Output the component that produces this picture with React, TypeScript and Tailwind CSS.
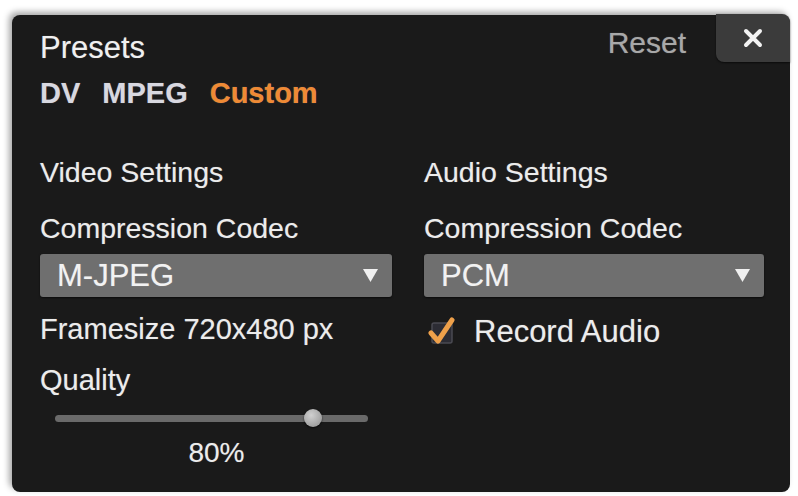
function Dropdown({ value, width }: { value: string; width: string }) {
  return (
    <div
      className={`${width} h-[43px] flex items-center justify-between pl-[17px] pr-[14px] rounded-[3px] bg-[#6f6f6f] shadow-[0_1px_2px_rgba(0,0,0,0.6)]`}
    >
      <span className="text-[31px] leading-none text-[#f2f2f2]">{value}</span>
      <svg width="15" height="13" viewBox="0 0 15 13">
        <path d="M0 0 H15 L7.5 13 Z" fill="#f0f0f0" />
      </svg>
    </div>
  );
}

export default function App() {
  return (
    <div className="w-[798px] h-[496px] bg-white pt-[15px] pl-[12px] pr-[8px] pb-[4px] font-['Liberation_Sans',Arial,sans-serif]">
      <div className="relative h-full w-full rounded-[8px] bg-[#1a1a1a] shadow-[-3px_-3px_6px_rgba(0,0,0,0.35)] pl-[28px] [text-shadow:0_0_1px_rgba(255,255,255,0.35)]">
        {/* header */}
        <div className="flex justify-between">
          <div>
            <div className="mt-[18px] h-[30px] flex items-center text-[31px] text-[#f0f0f0]">Presets</div>
            <div className="mt-[17px] h-[28px] flex items-center gap-[22px] text-[29px] font-bold">
              <span className="text-[#d8d8e0]">DV</span>
              <span className="text-[#d8d8e0]">MPEG</span>
              <span className="text-[#ef8a34]">Custom</span>
            </div>
          </div>
          <div className="flex items-start">
            <div className="mt-[12px] h-[30px] flex items-center text-[30px] text-[#a8a8a8]">Reset</div>
            <div className="ml-[30px] -mt-px w-[74px] h-[48px] flex items-center justify-center rounded-bl-[8px] rounded-tr-[8px] bg-[#3b3b3b] shadow-[0_1px_2px_rgba(0,0,0,0.6)]">
              <svg width="20" height="20" viewBox="0 0 20 20">
                <path d="M3 3 L17 17 M17 3 L3 17" stroke="#f2f2f2" strokeWidth="4" strokeLinecap="round" />
              </svg>
            </div>
          </div>
        </div>

        {/* settings */}
        <div className="flex text-[#ececec]">
          <div className="w-[384px]">
            <div className="mt-[50px] h-[28px] flex items-center text-[28.5px]">Video Settings</div>
            <div className="mt-[28px] h-[28px] flex items-center text-[28.5px]">Compression Codec</div>
            <div className="mt-[12px]">
              <Dropdown value="M-JPEG" width="w-[352px]" />
            </div>
            <div className="mt-[19px] h-[28px] flex items-center text-[29px]">Framesize 720x480 px</div>
            <div className="mt-[23px] h-[28px] flex items-center text-[29px]">Quality</div>
            <div className="mt-[13px] ml-[15px] w-[313px]">
              <div className="relative h-[20px] flex items-center">
                <div className="h-[7px] w-full rounded-full bg-[#6a6a6a]" />
                <div className="absolute left-[249px] top-px w-[18px] h-[18px] rounded-full bg-[radial-gradient(circle_at_40%_35%,#d0d0d0,#8e8e8e)] shadow-[0_1px_2px_rgba(0,0,0,0.7)]" />
              </div>
              <div className="mt-[11px] h-[28px] flex items-center justify-center pl-[10px] text-[28px]">80%</div>
            </div>
          </div>
          <div>
            <div className="mt-[50px] h-[28px] flex items-center text-[28.5px]">Audio Settings</div>
            <div className="mt-[28px] h-[28px] flex items-center text-[28.5px]">Compression Codec</div>
            <div className="mt-[12px]">
              <Dropdown value="PCM" width="w-[340px]" />
            </div>
            <div className="mt-[19px] h-[30px] flex items-center gap-[14px] pl-[4px]">
              <svg width="32" height="30" viewBox="0 0 32 30">
                <rect x="4" y="7" width="20" height="20" rx="2" fill="#2c2c34" stroke="#4a4a52" strokeWidth="1.5" />
                <path d="M3 17 L10 25 L24 4" fill="none" stroke="#eea04a" strokeWidth="5" strokeLinecap="round" strokeLinejoin="round" />
              </svg>
              <span className="text-[31px] leading-none">Record Audio</span>
            </div>
          </div>
        </div>
      </div>
    </div>
  );
}
